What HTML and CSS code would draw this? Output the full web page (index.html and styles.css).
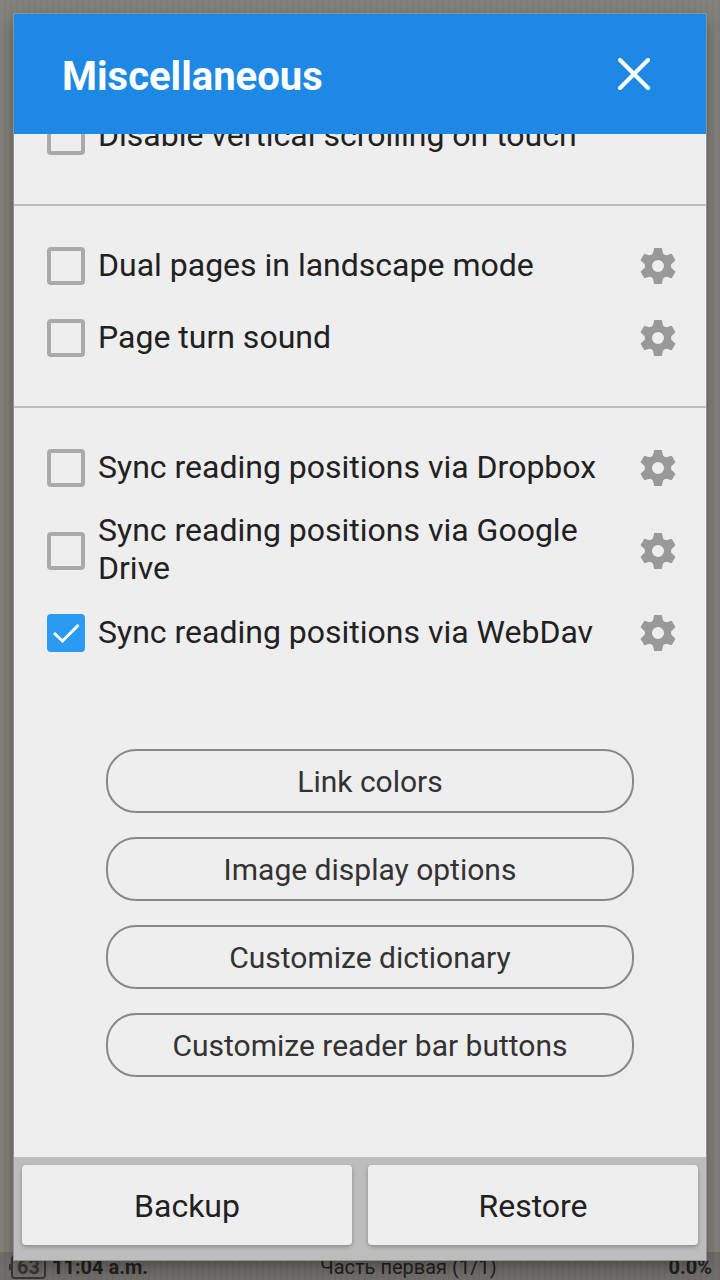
FILE: index.html
```html
<!DOCTYPE html>
<html lang="en">
<head>
<meta charset="utf-8">
<meta name="viewport" content="width=device-width, initial-scale=1">
<title>Miscellaneous</title>
<link rel="stylesheet" href="styles.css">
</head>
<body>
<svg class="defs" aria-hidden="true">
  <symbol id="gear" viewBox="-18 -18 36 36">
    <path fill-rule="evenodd" d="M-5-12.700-3.800-18H3.800L5-12.700Q6.200-10.800 8.500-10.700L13.700-12.300 17.500-5.700 13.500-2Q12.400 0 13.500 2L17.500 5.700 13.700 12.300 8.500 10.700Q6.200 10.800 5 12.700L3.800 18H-3.800L-5 12.700Q-6.200 10.800-8.500 10.700L-13.700 12.300-17.500 5.700-13.500 2Q-12.400 0-13.500-2L-17.500-5.700-13.700-12.300-8.500-10.700Q-6.200-10.800-5-12.700ZM0 6A6 6 0 1 0 0-6 6 6 0 0 0 0 6Z"/>
  </symbol>
</svg>
<footer class="status">
  <span class="status-left"><b class="battery">63</b><b>11:04 a.m.</b></span>
  <span class="chapter" lang="ru">Часть первая (1/1)</span>
  <b class="progress">0.0%</b>
</footer>
<main class="dialog" role="dialog" aria-labelledby="title">
  <header class="header">
    <h1 class="title" id="title">Miscellaneous</h1>
    <button class="close" type="button" aria-label="Close">
      <svg viewBox="0 0 32 32"><path d="M2 2 30 30M30 2 2 30"/></svg>
    </button>
  </header>
  <div class="content">
    <section class="group">
      <div class="row">
        <input class="check" type="checkbox" id="scroll"><label class="label" for="scroll">Disable vertical scrolling on touch</label>
      </div>
    </section>
    <section class="group">
      <div class="row">
        <input class="check" type="checkbox" id="dual"><label class="label" for="dual">Dual pages in landscape mode</label>
        <button class="gear" type="button" aria-label="Dual page settings"><svg><use href="#gear"/></svg></button>
      </div>
      <div class="row">
        <input class="check" type="checkbox" id="sound"><label class="label" for="sound">Page turn sound</label>
        <button class="gear" type="button" aria-label="Sound settings"><svg><use href="#gear"/></svg></button>
      </div>
    </section>
    <section class="group">
      <div class="row">
        <input class="check" type="checkbox" id="dropbox"><label class="label" for="dropbox">Sync reading positions via Dropbox</label>
        <button class="gear" type="button" aria-label="Dropbox settings"><svg><use href="#gear"/></svg></button>
      </div>
      <div class="row">
        <input class="check" type="checkbox" id="drive"><label class="label" for="drive">Sync reading positions via Google Drive</label>
        <button class="gear" type="button" aria-label="Google Drive settings"><svg><use href="#gear"/></svg></button>
      </div>
      <div class="row">
        <span class="tick-box">
          <input class="check" type="checkbox" id="webdav" checked>
          <svg class="tick" viewBox="0 0 38 38"><path d="M7 19 15.500 27 31.500 11"/></svg>
        </span><label class="label" for="webdav">Sync reading positions via WebDav</label>
        <button class="gear" type="button" aria-label="WebDav settings"><svg><use href="#gear"/></svg></button>
      </div>
    </section>
    <div class="options">
      <button class="option" type="button">Link colors</button>
      <button class="option" type="button">Image display options</button>
      <button class="option" type="button">Customize dictionary</button>
      <button class="option" type="button">Customize reader bar buttons</button>
    </div>
  </div>
  <div class="actions">
    <button class="action" type="button">Backup</button>
    <button class="action" type="button">Restore</button>
  </div>
</main>
</body>
</html>
```
FILE: styles.css
```css
* {
  box-sizing: border-box;
}

body {
  margin: 0;
  height: 100vh;
  padding: 14px 14px 20px;
  display: flex;
  overflow: hidden;
  font-family: Roboto, "Noto Sans", sans-serif;
  color: #212121;
  background: repeating-linear-gradient(90deg, #84827c 0 4px, #807e79 4px 6px);
}

button {
  margin: 0;
  padding: 0;
  border: 0;
  background: none;
  font: inherit;
  color: inherit;
}

.defs {
  position: absolute;
  width: 0;
  height: 0;
}

.status {
  position: absolute;
  left: 0;
  right: 0;
  bottom: 0;
  height: 28px;
  padding: 2px 8px 0 11px;
  display: flex;
  align-items: center;
  justify-content: space-between;
  font-size: 20px;
  line-height: 24px;
  color: #22211f;
  background: repeating-linear-gradient(90deg, #716f6c 0 4px, #6d6b68 4px 6px);
}

.status-left {
  display: flex;
  align-items: center;
  gap: 6px;
}

.battery {
  position: relative;
  padding: 0 4px;
  border: 2px solid #383735;
  border-radius: 4px;
  line-height: 20px;
  color: #383735;
}

.battery::before {
  content: "";
  position: absolute;
  left: -4px;
  top: 7px;
  width: 2px;
  height: 6px;
  background: #383735;
}

.dialog {
  position: relative;
  flex: 1;
  min-width: 0;
  display: flex;
  flex-direction: column;
  background: #eee;
  box-shadow: 0 0 0 1px #92918e, 0 6px 16px rgba(0, 0, 0, 0.35);
}

.header {
  flex: none;
  height: 120px;
  padding: 0 48px;
  display: flex;
  align-items: center;
  justify-content: space-between;
  color: #fff;
  background: #1e88e5;
}

.title {
  margin: 0;
  padding-top: 6px;
  font-size: 40px;
  line-height: 48px;
  font-weight: 700;
}

.close {
  width: 48px;
  height: 48px;
}

.close svg {
  display: block;
  width: 32px;
  height: 32px;
  margin: auto;
  fill: none;
  stroke: #fff;
  stroke-width: 4;
  stroke-linecap: round;
}

/* The list rests at the end of its scroll range. */
.content {
  flex: 1;
  min-height: 0;
  overflow: hidden;
  display: flex;
  flex-direction: column;
  justify-content: flex-end;
  padding-bottom: 80px;
}

.group {
  flex: none;
  padding: 24px 30px 32px 33px;
}

.group + .group {
  border-top: 2px solid #bdbdbd;
}

.row {
  min-height: 72px;
  display: flex;
  align-items: center;
}

.check {
  appearance: none;
  flex: none;
  display: block;
  width: 38px;
  height: 38px;
  margin: 0;
  border: 4px solid #aaa;
  border-radius: 4px;
}

.check:checked {
  border-color: #2a9af3;
  background: #2a9af3;
}

.tick-box {
  position: relative;
  flex: none;
}

.tick {
  position: absolute;
  inset: 0;
  width: 100%;
  height: 100%;
  fill: none;
  stroke: #fff;
  stroke-width: 3;
  pointer-events: none;
}

.label {
  flex: 1;
  min-width: 0;
  padding: 7px 0 10px 13px;
  font-size: 32px;
  line-height: 38px;
}

.gear {
  flex: none;
  width: 36px;
  height: 36px;
  margin-left: 28px;
}

.gear svg {
  display: block;
  width: 36px;
  height: 36px;
  fill: #999;
}

.options {
  flex: none;
  display: flex;
  flex-direction: column;
  gap: 24px;
  padding: 48px 72px 0 92px;
}

.option {
  height: 64px;
  padding-top: 2px;
  border: 2px solid #888;
  border-radius: 30px;
  font-size: 30px;
  line-height: 36px;
  color: #333;
}

.actions {
  flex: none;
  display: flex;
  gap: 16px;
  padding: 8px 8px 15px;
  background: #bdbdbd;
}

.action {
  flex: 1;
  height: 80px;
  padding-top: 2px;
  border-radius: 4px;
  font-size: 32px;
  line-height: 38px;
  background: #eee;
  box-shadow: 0 2px 4px rgba(0, 0, 0, 0.25);
}
```
